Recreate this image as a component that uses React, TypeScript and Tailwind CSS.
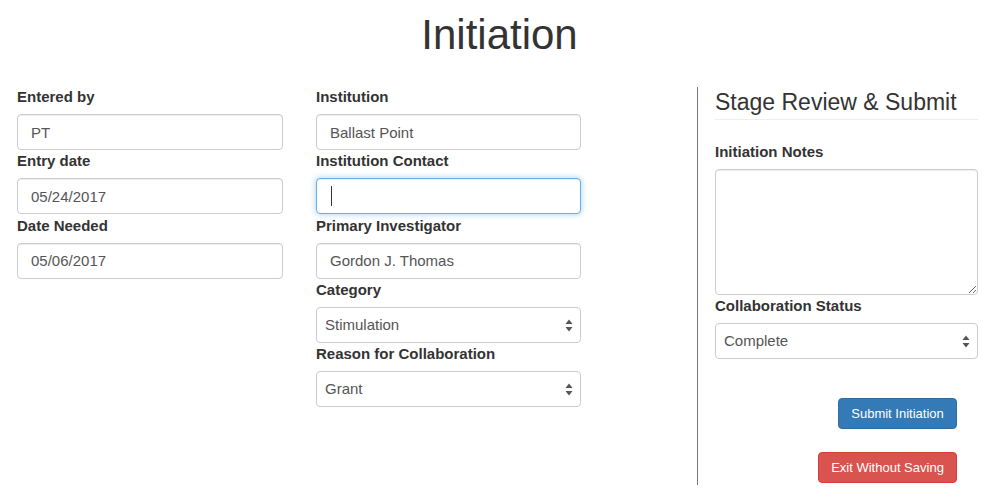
import React from 'react';

const font = { fontFamily: '"Liberation Sans", Arial, sans-serif' };

const Label = ({ children }: { children: React.ReactNode }) => (
  <label className="block h-5 leading-5 mb-[7px] text-[15px] font-bold text-[#333] whitespace-nowrap">
    {children}
  </label>
);

const TextInput = ({ value }: { value: string }) => (
  <input
    readOnly
    value={value}
    className="block w-full h-9 mb-[1.35px] px-[13px] text-[15px] text-[#555] bg-white border border-[#ccc] rounded-[4px] shadow-[inset_0_1px_1px_rgba(0,0,0,0.075)] outline-none"
  />
);

const FocusedInput = () => (
  <div className="flex items-center w-full h-9 mb-[1.35px] px-[14px] bg-white border border-[#66afe9] rounded-[4px] shadow-[inset_0_1px_1px_rgba(0,0,0,0.075),0_0_6px_rgba(102,175,233,0.6)]">
    <span className="block w-px h-5 bg-[#333]" />
  </div>
);

const SelectBox = ({ value }: { value: string }) => (
  <div className="flex items-center justify-between w-full h-9 mb-[1.35px] pl-[8px] pr-[7px] text-[15px] text-[#555] bg-white border border-[#ccc] rounded-[4px]">
    <span>{value}</span>
    <svg width="8" height="13" viewBox="0 0 8 13" className="text-[#555]">
      <path d="M4 0.5 L7.5 5 L0.5 5 Z" fill="currentColor" />
      <path d="M0.5 8 L7.5 8 L4 12.5 Z" fill="currentColor" />
    </svg>
  </div>
);

export default function App() {
  return (
    <div className="w-[999px] h-[504px] bg-white overflow-hidden" style={font}>
      <h1 className="pt-[12px] text-center text-[42px] leading-[46px] text-[#333]">Initiation</h1>

      <div className="flex mt-[29px] pl-[17px]">
        {/* left column */}
        <div className="w-[266px]">
          <Label>Entered by</Label>
          <TextInput value="PT" />
          <Label>Entry date</Label>
          <TextInput value="05/24/2017" />
          <Label>Date Needed</Label>
          <TextInput value="05/06/2017" />
        </div>

        {/* middle column */}
        <div className="w-[265px] ml-[33px]">
          <Label>Institution</Label>
          <TextInput value="Ballast Point" />
          <Label>Institution Contact</Label>
          <FocusedInput />
          <Label>Primary Investigator</Label>
          <TextInput value="Gordon J. Thomas" />
          <Label>Category</Label>
          <SelectBox value="Stimulation" />
          <Label>Reason for Collaboration</Label>
          <SelectBox value="Grant" />
        </div>

        {/* review column */}
        <div className="ml-[116px] w-[281px] border-l border-[#777] pl-[17px] pt-[2px] pb-[2px]">
          <div className="w-[263px]">
            <h3 className="text-[23px] leading-[26px] pb-[4px] border-b border-[#eee] text-[#333] whitespace-nowrap">
              Stage Review &amp; Submit
            </h3>
            <div className="mt-[22px]">
              <Label>Initiation Notes</Label>
              <textarea
                readOnly
                className="block w-full h-[126px] mb-[1.35px] px-3 py-2 text-[15px] text-[#555] bg-white border border-[#ccc] rounded-[4px] shadow-[inset_0_1px_1px_rgba(0,0,0,0.075)] outline-none"
              />
              <Label>Collaboration Status</Label>
              <SelectBox value="Complete" />
            </div>
            <div className="flex flex-col items-end pr-[21px] mt-[39px] gap-[23px]">
              <button className="w-[119px] h-[31px] text-[13px] text-white bg-[#337ab7] border border-[#2e6da4] rounded-[4px]">
                Submit Initiation
              </button>
              <button className="w-[139px] h-[31px] text-[13px] text-white bg-[#d9534f] border border-[#d43f3a] rounded-[4px]">
                Exit Without Saving
              </button>
            </div>
          </div>
        </div>
      </div>
    </div>
  );
}
